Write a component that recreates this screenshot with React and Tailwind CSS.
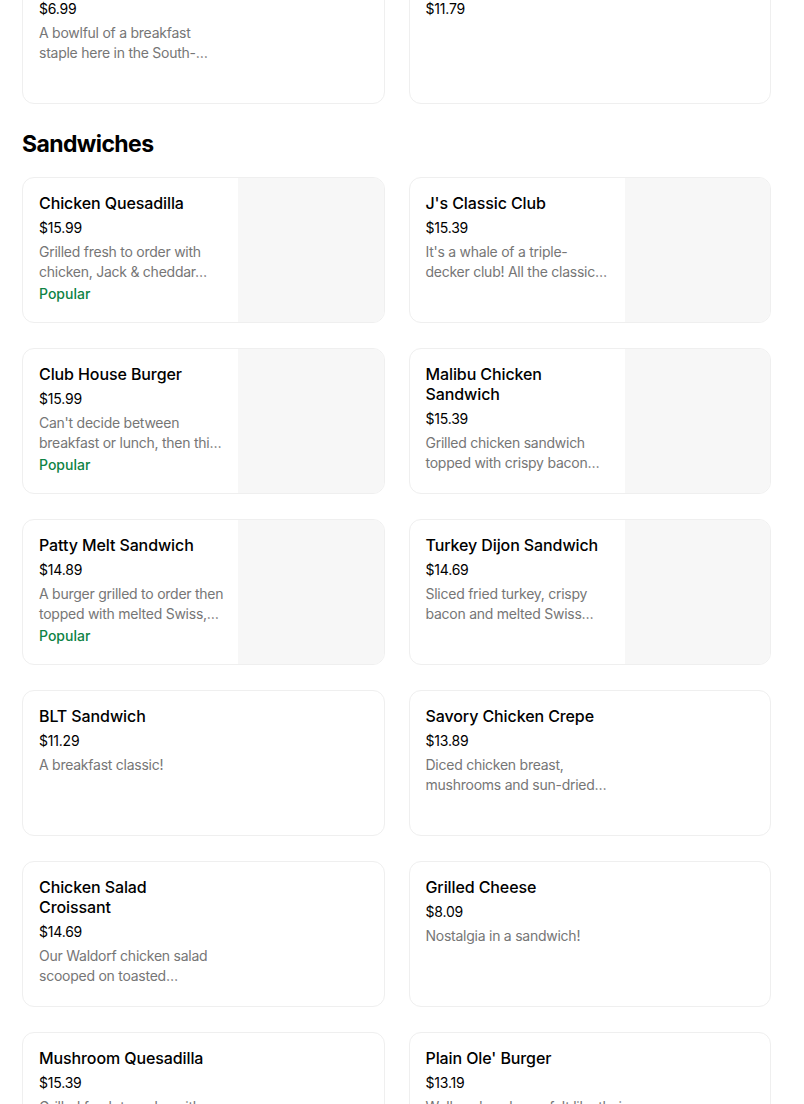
import React from "react";

const topItems = [
  {
    name: "Southern Grits",
    price: "$6.99",
    desc: ["A bowlful of a breakfast", "staple here in the South-…"],
  },
  { name: "Breakfast Platter", price: "$11.79", desc: [] },
];

const sandwiches = [
  {
    name: ["Chicken Quesadilla"],
    price: "$15.99",
    desc: ["Grilled fresh to order with", "chicken, Jack & cheddar…"],
    popular: true,
    image: true,
  },
  {
    name: ["J's Classic Club"],
    price: "$15.39",
    desc: ["It's a whale of a triple-", "decker club! All the classic…"],
    image: true,
  },
  {
    name: ["Club House Burger"],
    price: "$15.99",
    desc: ["Can't decide between", "breakfast or lunch, then thi…"],
    popular: true,
    image: true,
  },
  {
    name: ["Malibu Chicken", "Sandwich"],
    price: "$15.39",
    desc: ["Grilled chicken sandwich", "topped with crispy bacon…"],
    image: true,
  },
  {
    name: ["Patty Melt Sandwich"],
    price: "$14.89",
    desc: ["A burger grilled to order then", "topped with melted Swiss,…"],
    popular: true,
    image: true,
  },
  {
    name: ["Turkey Dijon Sandwich"],
    price: "$14.69",
    desc: ["Sliced fried turkey, crispy", "bacon and melted Swiss…"],
    image: true,
  },
  {
    name: ["BLT Sandwich"],
    price: "$11.29",
    desc: ["A breakfast classic!"],
  },
  {
    name: ["Savory Chicken Crepe"],
    price: "$13.89",
    desc: ["Diced chicken breast,", "mushrooms and sun-dried…"],
  },
  {
    name: ["Chicken Salad", "Croissant"],
    price: "$14.69",
    desc: ["Our Waldorf chicken salad", "scooped on toasted…"],
  },
  {
    name: ["Grilled Cheese"],
    price: "$8.09",
    desc: ["Nostalgia in a sandwich!"],
  },
  {
    name: ["Mushroom Quesadilla"],
    price: "$15.39",
    desc: ["Grilled fresh to order with", "mushrooms, Jack & cheddar…"],
  },
  {
    name: ["Plain Ole' Burger"],
    price: "$13.19",
    desc: ["Well, we've always felt like their", "burgers…"],
  },
];

function ItemCard({ item }) {
  const names = Array.isArray(item.name) ? item.name : [item.name];
  return (
    <div className="flex h-[146px] overflow-hidden rounded-xl border border-[#efefef] bg-white">
      <div className="w-[215px] shrink-0 px-4 pt-[15px]">
        <div className="text-[16px] font-medium leading-5 tracking-[-0.1px] text-black">
          {names.map((n) => (
            <div key={n} className="whitespace-nowrap">
              {n}
            </div>
          ))}
        </div>
        <div className="mt-[5px] text-[14px] leading-5 tracking-[-0.2px] text-black">
          {item.price}
        </div>
        <div className="mt-1 text-[14px] leading-5 tracking-[-0.25px] text-[#767676]">
          {item.desc.map((d) => (
            <div key={d} className="whitespace-nowrap">
              {d}
            </div>
          ))}
        </div>
        {item.popular && (
          <div className="mt-[2px] text-[14px] font-medium leading-5 text-[#0e8345]">
            Popular
          </div>
        )}
      </div>
      {item.image && <div className="flex-1 bg-[#f7f7f7]"></div>}
    </div>
  );
}

export default function App() {
  return (
    <div
      className="min-h-[1104px] bg-white pl-[22px] pr-[33px] pb-10"
      style={{ fontFamily: "Inter, 'Noto Sans', sans-serif" }}
    >
      <div className="-mt-[42px] grid grid-cols-2 gap-x-6">
        {topItems.map((item) => (
          <ItemCard key={item.price} item={item} />
        ))}
      </div>
      <h2 className="mt-6 mb-[17px] text-[23px] font-bold leading-8 tracking-[-0.6px] text-black">
        Sandwiches
      </h2>
      <div className="grid grid-cols-2 gap-x-6 gap-y-[25px]">
        {sandwiches.map((item) => (
          <ItemCard key={item.name.join(" ")} item={item} />
        ))}
      </div>
    </div>
  );
}
